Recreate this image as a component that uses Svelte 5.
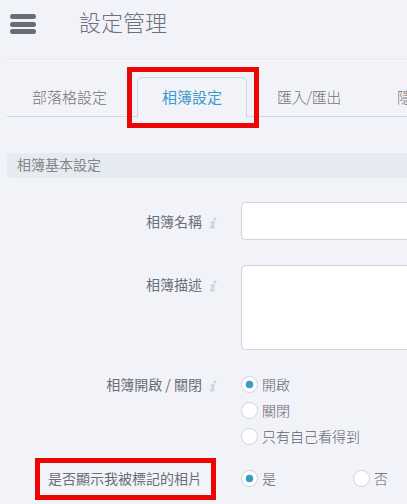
<script>
  const tabs = [
    { label: '部落格設定' },
    { label: '相簿設定', active: true },
    { label: '匯入/匯出' },
    { label: '隱私設定' }
  ];
  let visibility = $state('開啟');
  let tagged = $state('是');
</script>

{#snippet info()}
  <svg class="info" viewBox="0 0 8 12" aria-hidden="true">
    <path d="M4.9 0.6H7.7L7 3.2H4.2ZM1.7 4.2H6.1L4.8 9.1H5.8L5.2 11.4H0.5L1.1 9.1H2L2.7 6.3H1.1Z" />
  </svg>
{/snippet}

{#snippet choice(group, value, selected, pick)}
  <label class="choice">
    <input type="radio" name={group} checked={selected} onchange={() => pick(value)} />
    <span>{value}</span>
  </label>
{/snippet}

<main>
  <header>
    <button class="menu" aria-label="選單"><i></i><i></i><i></i></button>
    <h1>設定管理</h1>
  </header>

  <nav>
    {#each tabs as tab}
      <div class="tab" class:active={tab.active}>
        <span>{tab.label}</span>
        {#if tab.active}<div class="mark mark-tab"></div>{/if}
      </div>
    {/each}
  </nav>

  <h2>相簿基本設定</h2>

  <form>
    <div class="row name">
      <div class="label"><span>相簿名稱</span>{@render info()}</div>
      <input class="field" type="text" />
    </div>
    <div class="row desc">
      <div class="label"><span>相簿描述</span>{@render info()}</div>
      <textarea class="field"></textarea>
    </div>
    <div class="row open">
      <div class="label"><span>相簿開啟 / 關閉</span>{@render info()}</div>
      <div class="stack">
        {#each ['開啟', '關閉', '只有自己看得到'] as value}
          {@render choice('visibility', value, visibility === value, (v) => (visibility = v))}
        {/each}
      </div>
    </div>
    <div class="row tagged">
      <div class="label"><span>是否顯示我被標記的相片</span><div class="mark mark-label"></div></div>
      <div class="inline">
        {#each ['是', '否'] as value}
          {@render choice('tagged', value, tagged === value, (v) => (tagged = v))}
        {/each}
      </div>
    </div>
  </form>
</main>

<style>
  :global(body) { background: #f2f3f9; }
  main {
    box-sizing: border-box;
    width: 100%;
    height: 504px;
    padding-left: 7px;
    overflow: hidden;
    background: #f2f3f9;
    color: #6a6e78;
    font-family: "Noto Sans CJK TC", sans-serif;
    font-size: 14px;
  }
  header {
    box-sizing: border-box;
    display: flex;
    align-items: flex-start;
    height: 61px;
    padding: 0 0 0 3px;
    border-bottom: 1px solid #fff;
    box-shadow: inset 0 -1px #e3e6ec;
  }
  .menu {
    display: flex;
    flex-direction: column;
    gap: 2.5px;
    width: 26px;
    margin: 14px 43px 0 0;
    padding: 0;
    border: 0;
    background: none;
  }
  .menu i { height: 5px; border-radius: 2.5px; background: #686c77; }
  h1 {
    margin: 6px 0 0;
    color: #6c707d;
    font-size: 22px;
    font-weight: 300;
    line-height: 30px;
  }
  nav {
    display: flex;
    align-items: flex-end;
    height: 56px;
    box-shadow: inset 0 -1px #cfd7e3;
  }
  .tab {
    position: relative;
    box-sizing: border-box;
    flex: none;
    height: 40px;
    margin-right: 4px;
    padding: 0 25px;
    border: 1px solid transparent;
    border-bottom: 0;
    color: #747474;
    font-size: 15px;
    font-weight: 300;
    line-height: 37px;
    white-space: nowrap;
  }
  .tab:first-child { padding-left: 24px; }
  .tab.active {
    padding: 0 24px;
    border-color: #cbd5e5;
    border-radius: 5px 5px 0 0;
    background: #f2f3f9;
    color: #3a9bcb;
    font-weight: 400;
  }
  .tab:nth-child(3) { letter-spacing: -0.4px; }
  .mark {
    position: absolute;
    box-sizing: border-box;
    border: 5px solid #eb0505;
    pointer-events: none;
  }
  .mark-tab { left: -11px; top: -11px; width: 132px; height: 61px; }
  h2 {
    box-sizing: border-box;
    height: 25px;
    margin: 36px 0 0;
    padding-left: 10px;
    border-radius: 5px 0 0 5px;
    background: #e6ebf1;
    color: #818787;
    font-size: 14px;
    font-weight: 400;
    line-height: 23px;
  }
  form { padding-top: 24px; }
  .row { display: flex; align-items: flex-start; }
  .label {
    position: relative;
    box-sizing: border-box;
    display: flex;
    align-items: center;
    justify-content: flex-end;
    flex: none;
    width: 234px;
    height: 38px;
    padding-right: 24px;
    white-space: nowrap;
  }
  .info { width: 8px; height: 12px; margin: 3px 0 0 7px; fill: #d0d4de; }
  .field {
    box-sizing: border-box;
    flex: 1;
    min-width: 0;
    height: 38px;
    margin: 0;
    border: 1px solid #cdd4de;
    border-right: 0;
    border-radius: 5px 0 0 5px;
    outline: 0;
    background: #fff;
    resize: none;
  }
  .desc { margin-top: 25px; }
  .desc .field { height: 85px; }
  .open { margin-top: 14px; }
  .stack { padding-top: 7px; }
  .choice {
    display: flex;
    align-items: center;
    gap: 4px;
    width: 112px;
    height: 26px;
    color: #5e626d;
    font-weight: 300;
    white-space: nowrap;
  }
  .choice input {
    box-sizing: border-box;
    appearance: none;
    flex: none;
    width: 17px;
    height: 17px;
    margin: 0;
    border: 1px solid #ccd5e1;
    border-radius: 50%;
    background: #fff;
  }
  .choice input:checked { background: radial-gradient(circle, #3a9bcb 3.5px, #fff 4.2px); }
  .tagged { margin-top: 9px; }
  .open .label, .tagged .label { height: 40px; }
  .tagged .label { padding-right: 39px; }
  .inline { display: flex; padding-top: 7px; }
  .mark-label { left: 28px; top: 0; width: 181px; height: 42px; }
</style>
